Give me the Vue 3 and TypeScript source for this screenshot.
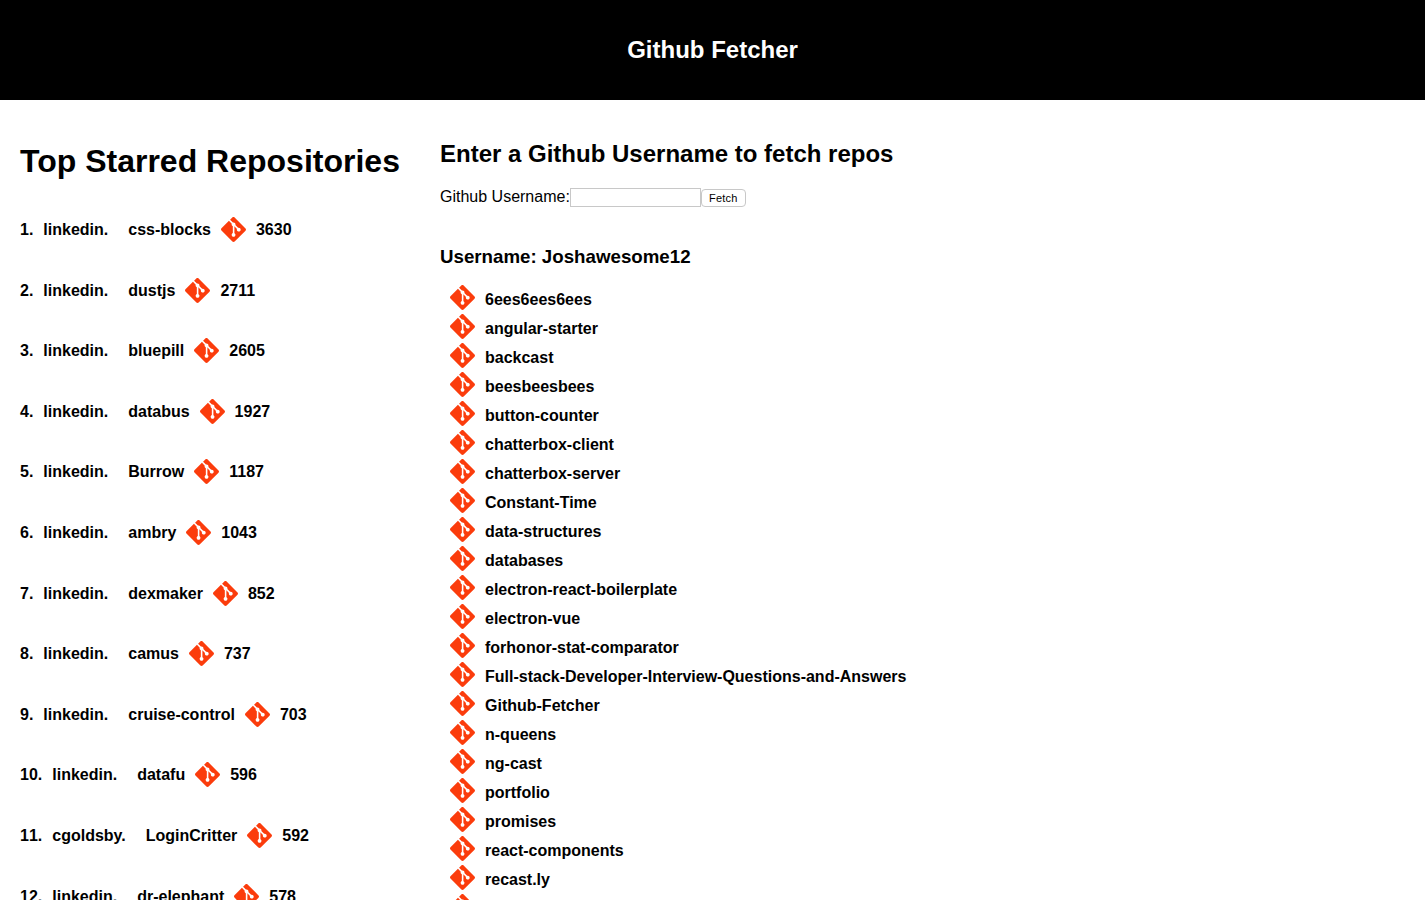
<script setup lang="ts">
const top: [string, string, number][] = [
  ['linkedin', 'css-blocks', 3630],
  ['linkedin', 'dustjs', 2711],
  ['linkedin', 'bluepill', 2605],
  ['linkedin', 'databus', 1927],
  ['linkedin', 'Burrow', 1187],
  ['linkedin', 'ambry', 1043],
  ['linkedin', 'dexmaker', 852],
  ['linkedin', 'camus', 737],
  ['linkedin', 'cruise-control', 703],
  ['linkedin', 'datafu', 596],
  ['cgoldsby', 'LoginCritter', 592],
  ['linkedin', 'dr-elephant', 578],
]
const repos: string[] = [
  '6ees6ees6ees', 'angular-starter', 'backcast', 'beesbeesbees', 'button-counter',
  'chatterbox-client', 'chatterbox-server', 'Constant-Time', 'data-structures', 'databases',
  'electron-react-boilerplate', 'electron-vue', 'forhonor-stat-comparator',
  'Full-stack-Developer-Interview-Questions-and-Answers', 'Github-Fetcher', 'n-queens',
  'ng-cast', 'portfolio', 'promises', 'react-components', 'recast.ly', '',
]
const gitPath = 'M23.546 10.93L13.067.452c-.604-.603-1.582-.603-2.188 0L8.708 2.627l2.76 2.76c.645-.215 1.379-.07 1.889.441.516.515.658 1.258.438 1.9l2.658 2.66c.645-.223 1.387-.078 1.9.435.721.72.721 1.884 0 2.604-.719.719-1.881.719-2.6 0-.539-.541-.674-1.337-.404-1.996L12.86 8.955v6.525c.176.086.342.203.488.348.713.721.713 1.883 0 2.6-.719.721-1.889.721-2.609 0-.719-.719-.719-1.879 0-2.598.182-.18.387-.316.605-.406V8.835c-.217-.091-.424-.222-.6-.401-.545-.545-.676-1.342-.396-2.009L7.636 3.7.45 10.881c-.6.605-.6 1.584 0 2.189l10.48 10.477c.604.604 1.582.604 2.186 0l10.43-10.43c.605-.603.605-1.582 0-2.187'
</script>

<template>
  <div class="page">
    <header class="header">Github Fetcher</header>
    <main class="main">
      <section class="left">
        <h1 class="left-title">Top Starred Repositories</h1>
        <div v-for="(r, i) in top" :key="r[1]" class="top-row">
          <span class="idx">{{ i + 1 }}.</span>
          <span>{{ r[0] }}.</span>
          <span class="repo-name">{{ r[1] }}</span>
          <svg class="git" viewBox="0 0 24 24"><path :d="gitPath" /></svg>
          <span>{{ r[2] }}</span>
        </div>
      </section>
      <section class="right">
        <h2 class="right-title">Enter a Github Username to fetch repos</h2>
        <div class="form">
          <label class="label" for="user">Github Username:</label>
          <input id="user" class="input" type="text" />
          <button class="btn" type="button">Fetch</button>
        </div>
        <h3 class="user">Username: Joshawesome12</h3>
        <ul class="repos">
          <li v-for="(name, i) in repos" :key="i" class="repo">
            <svg class="git" viewBox="0 0 24 24"><path :d="gitPath" /></svg>
            <span>{{ name }}</span>
          </li>
        </ul>
      </section>
    </main>
  </div>
</template>

<style>
html, body { margin: 0; overflow: hidden; background: #fff; }
</style>

<style scoped>
.page {
  height: 900px;
  overflow: hidden;
  font-family: "Liberation Sans", Arial, sans-serif;
  color: #000;
}
.header {
  height: 100px;
  background: #000;
  color: #fff;
  display: flex;
  align-items: center;
  justify-content: center;
  font-size: 24px;
  font-weight: 700;
}
.main { display: flex; }
.left { width: 400px; padding-left: 20px; flex: none; }
.left-title {
  margin: 43px 0 41px;
  font-size: 32px;
  line-height: 37px;
  font-weight: 700;
  white-space: nowrap;
}
.top-row {
  height: 60.6px;
  display: flex;
  align-items: flex-start;
  gap: 10px;
  font-size: 16px;
  font-weight: 700;
  line-height: 18px;
}
.idx { font-kerning: none; }
.repo-name { margin-left: 10px; }
.git { width: 25px; height: 25px; flex: none; fill: #fb3c0c; margin-top: -6px; }
.top-row .git { margin-top: -4px; }
.right { margin-left: 20px; flex: 1; }
.right-title {
  margin: 40px 0 20px;
  font-size: 24px;
  line-height: 28px;
  font-weight: 700;
}
.form { display: flex; align-items: flex-start; height: 20px; }
.label { font-size: 16px; line-height: 18px; }
.input {
  width: 131px;
  height: 19px;
  box-sizing: border-box;
  margin: 0;
  padding: 0 2px;
  border: 1px solid #c8c8c8;
  background: #fff;
  outline: none;
}
.btn {
  width: 45px;
  height: 18px;
  margin: 1px 0 0;
  padding: 0;
  box-sizing: border-box;
  border: 1px solid #c8c8c8;
  border-radius: 4px;
  background: #fff;
  color: #000;
  font-family: "Liberation Sans", Arial, sans-serif;
  font-size: 11px;
  letter-spacing: 0.2px;
  line-height: 16px;
}
.user {
  margin: 38px 0 24px;
  font-size: 18.72px;
  line-height: 21px;
  font-weight: 700;
}
.repos { list-style: none; margin: 0; padding: 0 0 0 10px; }
.repo {
  height: 29px;
  display: flex;
  align-items: flex-start;
  gap: 10px;
  font-size: 16px;
  font-weight: 700;
  line-height: 18px;
  white-space: nowrap;
}
</style>
